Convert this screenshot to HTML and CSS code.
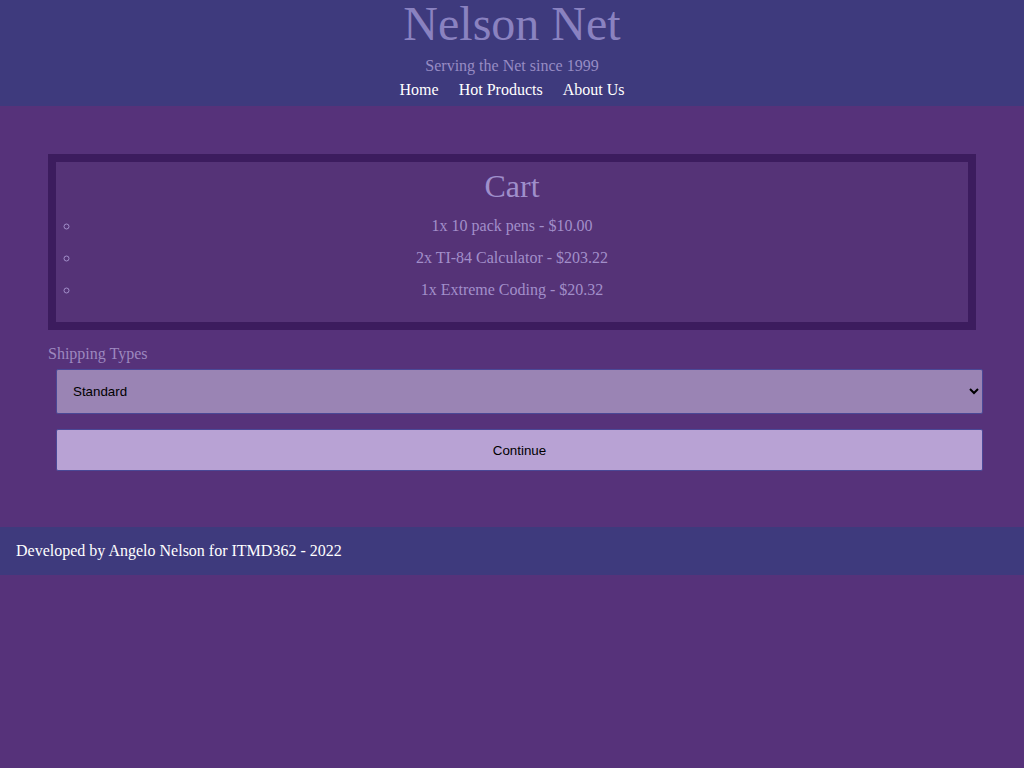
FILE: index.html
```html
<!DOCTYPE html>
<html lang="en">
<head>
<meta charset="utf-8">
<title>Nelson Net - Cart</title>
<link rel="stylesheet" href="styles.css">
</head>
<body>
<header class="site-header">
  <h1 class="site-title">Nelson Net</h1>
  <p class="tagline">Serving the Net since 1999</p>
  <nav class="nav">
    <a href="#">Home</a>
    <a href="#">Hot Products</a>
    <a href="#">About Us</a>
  </nav>
</header>
<main class="main">
  <section class="cart">
    <h2 class="cart-title">Cart</h2>
    <ul class="cart-list">
      <li>1x 10 pack pens - $10.00</li>
      <li>2x TI-84 Calculator - $203.22</li>
      <li>1x Extreme Coding - $20.32</li>
    </ul>
  </section>
  <form class="ship-form">
    <label class="ship-label" for="ship">Shipping Types</label>
    <select id="ship" class="ship-select">
      <option>Standard</option>
      <option>Express</option>
      <option>Overnight</option>
    </select>
    <button type="button" class="continue">Continue</button>
  </form>
</main>
<footer class="site-footer">Developed by Angelo Nelson for ITMD362 - 2022</footer>
</body>
</html>
```
FILE: styles.css
```css
html, body {
  margin: 0;
  padding: 0;
  background: #56327a;
  font-family: "Liberation Serif", "Times New Roman", serif;
  font-size: 16px;
}

.site-header {
  background: #3e3a7d;
  text-align: center;
  padding: 0 0 7px;
}

.site-title {
  margin: 0;
  font-size: 48px;
  line-height: 48px;
  font-weight: normal;
  color: #8a82c0;
}

.tagline {
  margin: 9px 0 0;
  line-height: 18px;
  color: #978cc4;
}

.nav {
  margin-top: 6px;
  display: flex;
  justify-content: center;
  gap: 20px;
  line-height: 18px;
}

.nav a {
  color: #ffffff;
  text-decoration: none;
}

.main {
  padding: 48px 48px 48px;
}

.cart {
  border: 8px solid #3c1c5e;
  background: #553377;
  padding: 6px 0 0;
}

.cart-title {
  margin: 0 0 5px;
  font-size: 32px;
  line-height: 37px;
  font-weight: normal;
  text-align: center;
  color: #9f8fcb;
}

.cart-list {
  list-style: circle;
  margin: 0 0 16px;
  padding: 0 24px;
  color: #a28fca;
  text-align: center;
}

.cart-list li {
  line-height: 32px;
}

.ship-form {
  display: flex;
  flex-direction: column;
  align-items: flex-start;
}

.ship-label {
  color: #9d88bf;
  line-height: 18px;
  margin-top: 15px;
}

.ship-select {
  margin: 6px 0 0 8px;
  width: calc(100% - 1px);
  height: 45px;
  box-sizing: border-box;
  background: #9a84b4;
  border: 1px solid #4a4896;
  border-radius: 2px;
  padding: 0 12px;
  font-family: "Liberation Sans", Arial, sans-serif;
  font-size: 13.33px;
  color: #000;
}

.continue {
  margin: 15px 0 8px 8px;
  width: calc(100% - 1px);
  height: 42px;
  box-sizing: border-box;
  background: #b8a2d4;
  border: 1px solid #4a4896;
  border-radius: 2px;
  font-family: "Liberation Sans", Arial, sans-serif;
  font-size: 13.33px;
  color: #000;
}

.site-footer {
  background: #3e3a7d;
  color: #ffffff;
  padding: 15px 16px;
  line-height: 18px;
}
```
